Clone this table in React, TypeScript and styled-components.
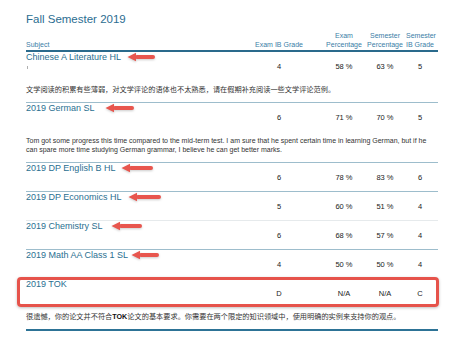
import styled, { createGlobalStyle } from "styled-components";

const GlobalStyle = createGlobalStyle`
  body {
    margin: 0;
    background: #ffffff;
    font-family: "Liberation Sans", Arial, sans-serif;
  }
`;

type Separator = "medium" | "light" | "strong";

interface CourseRow {
  name: string;
  examGrade: string;
  examPct: string;
  semPct: string;
  semGrade: string;
  arrow?: { gap: number; width: number };
  comment?: React.ReactNode;
  cjk?: boolean;
  tick?: boolean;
  separator: Separator;
  highlight?: boolean;
}

const COLUMNS = "224px 74px 40px 42px 28px";

const Page = styled.div`
  width: 412px;
  padding: 13px 32px 0 26px;
`;

const Title = styled.h1`
  margin: 0 0 5px;
  font-size: 11.5px;
  line-height: 13px;
  font-weight: normal;
  color: #2b6d91;
`;

const HeaderRow = styled.div`
  display: grid;
  grid-template-columns: ${COLUMNS};
  align-items: end;
  padding-bottom: 1px;
  border-bottom: 2px solid #2a6a8c;
`;

const HeaderCell = styled.div<{ $padRight?: number }>`
  font-size: 7px;
  line-height: 9px;
  color: #3b7ea6;
  text-align: center;
  white-space: nowrap;
  padding-right: ${(p) => p.$padRight ?? 0}px;
`;

const SubjectHeader = styled(HeaderCell)`
  text-align: left;
`;

const separatorColor: Record<Separator, string> = {
  medium: "1px solid #9dbdcc",
  light: "1px solid #e6eaec",
  strong: "2px solid #2d7396",
};

const Group = styled.div<{ $separator: Separator }>`
  position: relative;
  border-bottom: ${(p) => separatorColor[p.$separator]};
`;

const ScoreRow = styled.div`
  display: grid;
  grid-template-columns: ${COLUMNS};
  align-items: center;
  height: 28px;
  padding-top: 1px;
  box-sizing: border-box;
`;

const SubjectCell = styled.div`
  display: flex;
  flex-direction: column;
  height: 20px;
  margin-top: -9px;
`;

const SubjectName = styled.div`
  display: flex;
  align-items: center;
  font-size: 9px;
  line-height: 10px;
  color: #2a6f91;
  white-space: nowrap;
`;

const Tick = styled.span`
  display: block;
  width: 1px;
  height: 3px;
  margin: 4px 0 0 1px;
  background: #b0b0b0;
`;

const Value = styled.div<{ $padRight?: number }>`
  font-size: 7.5px;
  color: #222;
  text-align: center;
  padding-right: ${(p) => p.$padRight ?? 0}px;
`;

const Comment = styled.div<{ $cjk?: boolean }>`
  padding: 5px 0 8px;
  font-size: ${(p) => (p.$cjk ? "7.2px" : "7px")};
  line-height: 9px;
  color: #333;
  font-family: ${(p) =>
    p.$cjk
      ? `"Liberation Sans", "Noto Sans CJK SC", sans-serif`
      : `"Liberation Sans", Arial, sans-serif`};

  & b {
    color: #111;
  }
`;

const HighlightBox = styled.div`
  position: absolute;
  top: -2px;
  left: -9px;
  right: -1px;
  height: 30px;
  box-sizing: border-box;
  border: 3px solid #e6534b;
  border-radius: 4px;
  box-shadow: 0 1px 3px rgba(0, 0, 0, 0.25);
  pointer-events: none;
`;

const ArrowSvg = styled.svg<{ $gap: number }>`
  margin-left: ${(p) => p.$gap}px;
  flex-shrink: 0;
  filter: drop-shadow(0 1px 1px rgba(0, 0, 0, 0.2));
`;

function Arrow({ gap, width }: { gap: number; width: number }) {
  return (
    <ArrowSvg $gap={gap} width={width} height={10} viewBox={`0 0 ${width} 10`}>
      <path d="M0.5 5 L9 0.8 L9 9.2 Z" fill="#e8564e" />
      <rect x={8} y={3.1} width={width - 9} height={3.8} rx={1.9} fill="#e8564e" />
    </ArrowSvg>
  );
}

const rows: CourseRow[] = [
  {
    name: "Chinese A Literature HL",
    examGrade: "4",
    examPct: "58 %",
    semPct: "63 %",
    semGrade: "5",
    arrow: { gap: 6, width: 29 },
    tick: true,
    cjk: true,
    comment: "文学阅读的积累有些薄弱，对文学评论的语体也不太熟悉，请在假期补充阅读一些文学评论范例。",
    separator: "medium",
  },
  {
    name: "2019 German SL",
    examGrade: "6",
    examPct: "71 %",
    semPct: "70 %",
    semGrade: "5",
    arrow: { gap: 10, width: 30 },
    comment:
      "Tom got some progress this time compared to the mid-term test. I am sure that he spent certain time in learning German, but if he can spare more time studying German grammar, I believe he can get better marks.",
    separator: "medium",
  },
  {
    name: "2019 DP English B HL",
    examGrade: "6",
    examPct: "78 %",
    semPct: "83 %",
    semGrade: "6",
    arrow: { gap: 6, width: 33 },
    separator: "medium",
  },
  {
    name: "2019 DP Economics HL",
    examGrade: "5",
    examPct: "60 %",
    semPct: "51 %",
    semGrade: "4",
    arrow: { gap: 7, width: 34 },
    separator: "light",
  },
  {
    name: "2019 Chemistry SL",
    examGrade: "6",
    examPct: "68 %",
    semPct: "57 %",
    semGrade: "4",
    arrow: { gap: 8, width: 32 },
    separator: "medium",
  },
  {
    name: "2019 Math AA Class 1 SL",
    examGrade: "4",
    examPct: "50 %",
    semPct: "50 %",
    semGrade: "4",
    arrow: { gap: 3, width: 29 },
    separator: "medium",
  },
  {
    name: "2019 TOK",
    examGrade: "D",
    examPct: "N/A",
    semPct: "N/A",
    semGrade: "C",
    cjk: true,
    highlight: true,
    comment: (
      <>
        很遗憾，你的论文并不符合<b>TOK</b>论文的基本要求。你需要在两个限定的知识领域中，使用明确的实例来支持你的观点。
      </>
    ),
    separator: "strong",
  },
];

export default function App() {
  return (
    <>
      <GlobalStyle />
      <Page>
        <Title>Fall Semester 2019</Title>
        <HeaderRow>
          <SubjectHeader>Subject</SubjectHeader>
          <HeaderCell $padRight={16}>Exam IB Grade</HeaderCell>
          <HeaderCell>
            Exam
            <br />
            Percentage
          </HeaderCell>
          <HeaderCell>
            Semester
            <br />
            Percentage
          </HeaderCell>
          <HeaderCell>
            Semester
            <br />
            IB Grade
          </HeaderCell>
        </HeaderRow>

        {rows.map((row) => (
          <Group key={row.name} $separator={row.separator}>
            <ScoreRow>
              <SubjectCell>
                <SubjectName>
                  {row.name}
                  {row.arrow && <Arrow {...row.arrow} />}
                </SubjectName>
                {row.tick && <Tick />}
              </SubjectCell>
              <Value $padRight={16}>{row.examGrade}</Value>
              <Value>{row.examPct}</Value>
              <Value>{row.semPct}</Value>
              <Value>{row.semGrade}</Value>
            </ScoreRow>
            {row.comment && <Comment $cjk={row.cjk}>{row.comment}</Comment>}
            {row.highlight && <HighlightBox />}
          </Group>
        ))}
      </Page>
    </>
  );
}
